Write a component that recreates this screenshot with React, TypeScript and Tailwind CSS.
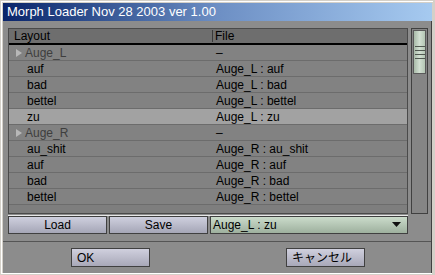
import React from "react";

type Row = { name: string; file: string; group?: boolean; selected?: boolean };

const rows: Row[] = [
  { name: "Auge_L", file: "–", group: true },
  { name: "auf", file: "Auge_L : auf" },
  { name: "bad", file: "Auge_L : bad" },
  { name: "bettel", file: "Auge_L : bettel" },
  { name: "zu", file: "Auge_L : zu", selected: true },
  { name: "Auge_R", file: "–", group: true },
  { name: "au_shit", file: "Auge_R : au_shit" },
  { name: "auf", file: "Auge_R : auf" },
  { name: "bad", file: "Auge_R : bad" },
  { name: "bettel", file: "Auge_R : bettel" },
];

const font = { fontFamily: '"Liberation Sans", "Noto Sans CJK JP", sans-serif' };

function ListRow({ row }: { row: Row }) {
  return (
    <div
      className={`flex h-[16px] items-center border-b border-[#6c6c6c] text-[12px] leading-none ${
        row.selected ? "bg-[#a2a2a2]" : "bg-[#828282]"
      }`}
    >
      <div className="flex w-[204px] items-center">
        {row.group ? (
          <>
            <svg width="10" height="10" viewBox="0 0 10 10" className="ml-[5px] mr-[1px]">
              <path d="M2 1 L8 5 L2 9 Z" fill="#b8b8b8" />
            </svg>
            <span className="text-[#3e3e3e]">{row.name}</span>
          </>
        ) : (
          <span className="ml-[18px] text-black">{row.name}</span>
        )}
      </div>
      <div className="pl-[3px] text-black">{row.file}</div>
    </div>
  );
}

export default function App() {
  return (
    <div className="h-[275px] w-[435px] bg-[#d4d0c8] pl-[1px] pt-[1px]" style={font}>
      <div className="flex h-[273px] w-[432px] flex-col border-l border-t border-white pr-[1px]">
        <div className="ml-[1px] mt-[1px] flex h-[18px] items-center bg-gradient-to-r from-[#0a246a] via-[#6d8fc4] to-[#a6caf0] pl-[4px] text-[13px] text-white">
          Morph Loader Nov 28 2003 ver 1.00
        </div>
        <div className="ml-[1px] flex flex-1 flex-col border-r border-[#404040] bg-[#8c8c8c]">
          <div className="flex gap-[3px] pl-[5px] pt-[7px]">
            <div className="flex w-[400px] flex-col">
              <div className="flex h-[186px] flex-col border border-[#4a4a4a] bg-[#7e7e7e]">
                <div className="flex h-[16px] items-center border-b-2 border-black bg-[#6e6e6e] text-[12px] leading-none text-black">
                  <div className="w-[204px] border-r border-[#3a3a3a] pl-[5px]">Layout</div>
                  <div className="pl-[2px]">File</div>
                </div>
                {rows.map((r, i) => (
                  <ListRow key={i} row={r} />
                ))}
              </div>
              <div className="mt-[1px] h-[1px] w-[400px] bg-[#e8e8e8]" />
              <div className="flex h-[18px] gap-[2px] text-[12px] leading-none text-black">
                <button className="w-[99px] border border-[#404040] bg-gradient-to-b from-[#cfd0df] to-[#a5a6b6]">Load</button>
                <button className="w-[99px] border border-[#404040] bg-gradient-to-b from-[#cfd0df] to-[#a5a6b6]">Save</button>
                <div className="flex flex-1 items-center justify-between border border-[#404040] bg-gradient-to-b from-[#cbdccb] to-[#9eb09e] pl-[2px] pr-[6px]">
                  <span>Auge_L : zu</span>
                  <svg width="9" height="6" viewBox="0 0 9 6">
                    <path d="M0 0 H9 L4.5 5 Z" fill="#111" />
                  </svg>
                </div>
              </div>
            </div>
            <div className="mt-[0px] flex h-[186px] w-[17px] flex-col border border-[#404040] bg-[#858585] p-[1px]">
              <div className="flex h-[44px] flex-col items-center justify-center gap-[3px] border border-[#5a5a5a] bg-gradient-to-r from-[#a9bba9] via-[#d2e0d2] to-[#b4c6b4]">
                <div className="h-[1px] w-[10px] bg-[#505850]" />
                <div className="h-[1px] w-[10px] bg-[#505850]" />
                <div className="h-[1px] w-[10px] bg-[#505850]" />
                <div className="h-[1px] w-[10px] bg-[#505850]" />
              </div>
            </div>
          </div>
          <div className="mt-[7px] h-[1px] bg-[#555]" />
          <div className="flex flex-1 items-start pt-[6px] text-[12px] leading-none text-black">
            <button className="ml-[68px] flex h-[19px] w-[79px] items-center border border-[#404040] bg-gradient-to-b from-[#d0d0de] to-[#a8a8b8] pl-[5px]">
              OK
            </button>
            <button className="ml-[136px] flex h-[19px] w-[79px] items-center border border-[#404040] bg-gradient-to-b from-[#d0d0de] to-[#a8a8b8] pl-[5px]">
              キャンセル
            </button>
          </div>
        </div>
        <div className="h-[1px] bg-white" />
      </div>
    </div>
  );
}
